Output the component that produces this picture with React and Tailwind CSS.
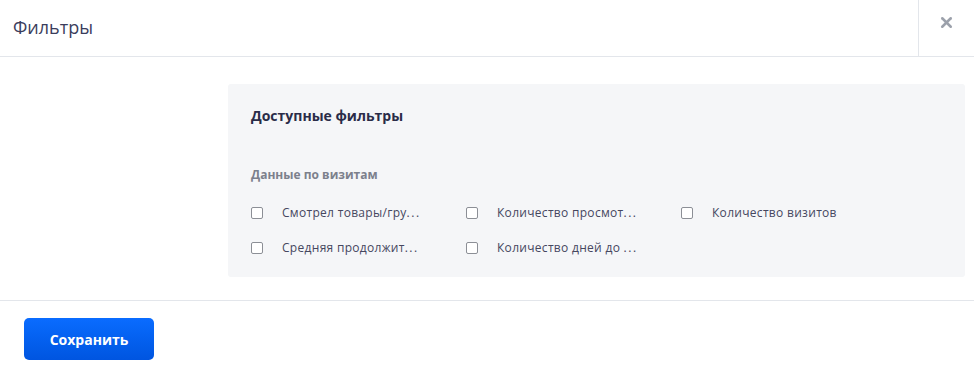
import { X } from 'lucide-react';

const items = [
    'Смотрел товары/гру',
    'Количество просмот',
    'Количество визитов',
    'Средняя продолжит',
    'Количество дней до ',
];

export default function App() {
    return (
        <div className="w-[974px] h-[372px] bg-white flex flex-col" style={{ fontFamily: '"Open Sans", "Noto Sans", sans-serif' }}>
            {/* Header */}
            <div className="h-[57px] flex items-stretch border-b border-[#e3e6eb] shrink-0">
                <div className="flex-1 flex items-center pl-[13px] pb-[2px] text-[18px] text-[#3b3d5c]">Фильтры</div>
                <div className="w-[56px] border-l border-[#e3e6eb] flex items-center justify-center pb-[12px]">
                    <X className="w-[17px] h-[17px] text-[#9ca1ab]" strokeWidth={3.6} />
                </div>
            </div>

            {/* Body */}
            <div className="flex-1 pt-[27px] pl-[228px] pr-[9px]">
                <div className="bg-[#f5f6f8] rounded-[3px] h-[193px] pl-[23px] pt-[22px]">
                    <div className="text-[14px] font-bold text-[#2a2c48] leading-[20px]">Доступные фильтры</div>
                    <div className="mt-[41px] text-[12px] font-bold text-[#7c808c] leading-[16px]">Данные по визитам</div>
                    <div className="mt-[20px] grid grid-cols-[215px_215px_215px] gap-y-[15px]">
                        {items.map((t, i) => (
                            <label key={t} className="flex items-center h-[20px]">
                                <span className="w-[12px] h-[12px] border border-[#8c8f96] rounded-[2px] bg-white shrink-0" />
                                <span className="ml-[19px] text-[12px] text-[#45475f] whitespace-nowrap tracking-[0.3px]">
                                    {t}
                                    {i !== 2 && <span className="tracking-[1.5px]">...</span>}
                                </span>
                            </label>
                        ))}
                    </div>
                </div>
            </div>

            {/* Footer */}
            <div className="h-[72px] border-t border-[#e3e6eb] shrink-0 pl-[24px] pt-[17px]">
                <button className="w-[130px] h-[42px] rounded-[5px] bg-gradient-to-b from-[#0a6cff] to-[#0055e0] text-white text-[14px] font-bold">
                    Сохранить
                </button>
            </div>
        </div>
    );
}
